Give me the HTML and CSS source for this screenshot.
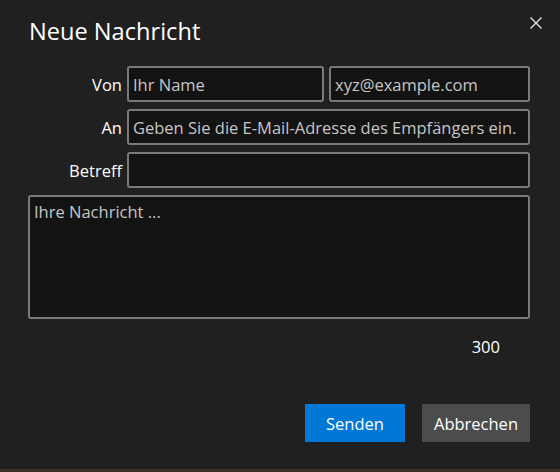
FILE: index.html
```html
<!DOCTYPE html>
<html lang="de">
<head>
    <meta charset="UTF-8">
    <meta name="viewport" content="width=device-width, initial-scale=1.0">
    <title>Neue Nachricht</title>
    <link rel="stylesheet" href="styles.css">
</head>
<body>
    <div class="dialog">
        <div class="dialog-header">
            <h1>Neue Nachricht</h1>
            <button class="close-btn" title="Schließen">
                <svg width="12" height="12" viewBox="0 0 12 12">
                    <path d="M0.5 0.5 L11.5 11.5 M11.5 0.5 L0.5 11.5" stroke="#e8e8e8" stroke-width="1.3" fill="none"/>
                </svg>
            </button>
        </div>
        <form class="message-form" onsubmit="return false;">
            <label for="from-name">Von</label>
            <div class="from-row">
                <input type="text" id="from-name" placeholder="Ihr Name">
                <input type="email" id="from-email" placeholder="xyz@example.com">
            </div>
            <label for="to">An</label>
            <input type="email" id="to" placeholder="Geben Sie die E-Mail-Adresse des Empfängers ein.">
            <label for="subject">Betreff</label>
            <input type="text" id="subject">
            <textarea id="message" placeholder="Ihre Nachricht ..."></textarea>
        </form>
        <div class="char-count">300</div>
        <div class="actions">
            <button class="btn btn-primary">Senden</button>
            <button class="btn btn-secondary">Abbrechen</button>
        </div>
    </div>
</body>
</html>
```

FILE: styles.css
```css
body {
    margin: 0;
    background-color: #3a3226;
    font-family: "Open Sans", "Noto Sans", sans-serif;
    color: #ffffff;
}
.dialog {
    height: 469px;
    box-sizing: border-box;
    background-color: #202020;
    padding: 0 30px 0 28px;
    display: flex;
    flex-direction: column;
}
.dialog-header {
    display: flex;
    justify-content: space-between;
    align-items: flex-start;
    padding-top: 15px;
    height: 50px;
    box-sizing: border-box;
}
h1 {
    margin: 0 0 0 1px;
    font-size: 23.6px;
    font-weight: normal;
    line-height: 32px;
    color: #ffffff;
}
.close-btn {
    background: none;
    border: none;
    padding: 0;
    margin-top: 2px;
    margin-right: -12px;
    width: 12px;
    height: 12px;
    cursor: pointer;
}
.close-btn svg {
    display: block;
}
.message-form {
    display: grid;
    grid-template-columns: 94px 1fr;
    column-gap: 5px;
    row-gap: 7px;
    margin-top: 16px;
}
label {
    text-align: right;
    align-self: center;
    font-size: 16.5px;
    color: #ffffff;
}
.from-row {
    display: flex;
    gap: 5px;
}
#from-name {
    flex: 0 0 197px;
}
#from-email {
    flex: 1;
    min-width: 0;
}
input, textarea {
    box-sizing: border-box;
    height: 36px;
    width: 100%;
    background-color: #131313;
    border: 2px solid #7a7a7a;
    border-radius: 3px;
    padding: 0 4px;
    font-family: inherit;
    font-size: 16.5px;
    color: #ffffff;
    outline: none;
}
input::placeholder, textarea::placeholder {
    color: #c6c6c6;
    opacity: 1;
}
textarea {
    grid-column: 1 / 3;
    height: 124px;
    padding: 3px 4px;
    resize: none;
}
.char-count {
    text-align: right;
    padding-right: 30px;
    margin-top: 17px;
    font-size: 16.5px;
    line-height: 22px;
}
.actions {
    display: flex;
    justify-content: flex-end;
    gap: 17px;
    margin-top: 46px;
}
.btn {
    height: 38px;
    border: none;
    font-family: inherit;
    font-size: 16.5px;
    color: #ffffff;
    cursor: pointer;
}
.btn-primary {
    width: 100px;
    background-color: #0078d7;
}
.btn-secondary {
    width: 108px;
    background-color: #4c4c4c;
}
```
